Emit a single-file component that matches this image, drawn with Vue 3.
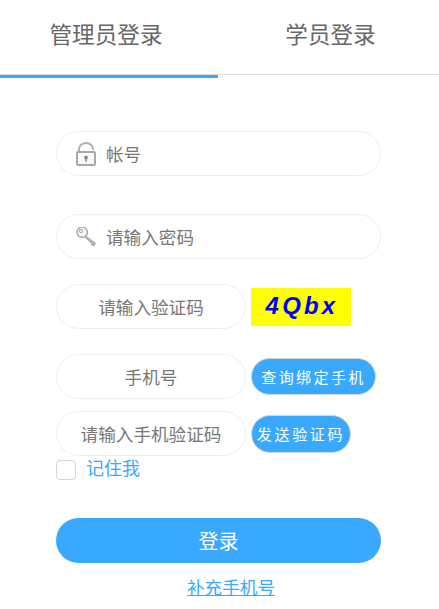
<script setup>
</script>

<template>
  <div class="page">
    <div class="tabs">
      <div class="tab active">管理员登录</div>
      <div class="tab second-tab">学员登录</div>
    </div>
    <form class="form" @submit.prevent>
      <div class="field wide">
        <svg class="icon" viewBox="0 0 20 24" width="20" height="24">
          <path d="M3 10V7.2a7 6.2 0 0 1 14 0v0.8" fill="none" stroke="#b0b0b0" stroke-width="2"/>
          <rect x="1" y="10" width="18" height="13" rx="1" fill="#fafafa" stroke="#a8a8a8" stroke-width="2"/>
          <circle cx="10" cy="15.5" r="1.9" fill="#888"/>
          <rect x="9.2" y="16" width="1.6" height="3.6" fill="#888"/>
        </svg>
        <span class="ph">帐号</span>
      </div>
      <div class="field wide second">
        <svg class="icon" viewBox="0 0 20 20" width="20" height="20">
          <circle cx="6.2" cy="5.2" r="5.2" fill="#f6f6f6" stroke="#b0b0b0" stroke-width="1.6"/>
          <circle cx="5" cy="4" r="1.6" fill="none" stroke="#b0b0b0" stroke-width="1.1"/>
          <path d="M10 8.5 L20 16 L18.5 19.5 L15.5 18.5 L14.5 16 L8.5 10.5 Z" fill="#b5b5b5"/>
        </svg>
        <span class="ph">请输入密码</span>
      </div>
      <div class="row third">
        <div class="field short center"><span class="ph">请输入验证码</span></div>
        <div class="captcha">4Qbx</div>
      </div>
      <div class="row fourth">
        <div class="field short center"><span class="ph">手机号</span></div>
        <button type="button" class="pill">查询绑定手机</button>
      </div>
      <div class="row fifth">
        <div class="field short center"><span class="ph">请输入手机验证码</span></div>
        <button type="button" class="pill small">发送验证码</button>
      </div>
      <label class="remember">
        <span class="check"></span>
        <span class="rem-text">记住我</span>
      </label>
      <button type="button" class="login">登录</button>
      <div class="link-row"><a class="link" href="#">补充手机号</a></div>
    </form>
  </div>
</template>

<style>
html, body { margin: 0; background: #fff; }
</style>

<style scoped>
.page {
  width: 439px;
  height: 609px;
  overflow: hidden;
  background: #fff;
  font-family: "Noto Sans CJK SC", "Liberation Sans", sans-serif;
}
.tabs {
  display: flex;
  height: 74px;
  border-bottom: 1px solid #dcdcdc;
  box-sizing: content-box;
}
.tab {
  flex: none;
  display: flex;
  justify-content: center;
  padding-top: 17px;
  font-size: 22.6px;
  line-height: 34px;
  color: #666;
  position: relative;
  box-sizing: border-box;
}
.tab.active {
  width: 218px;
  padding-right: 6px;
}
.second-tab {
  width: 221px;
  padding-left: 4px;
}
.tab.active::after {
  content: "";
  position: absolute;
  left: 0;
  right: 0;
  bottom: -4px;
  height: 3px;
  background: #39a9ff;
}
.form {
  padding: 56px 58px 0 56px;
  display: flex;
  flex-direction: column;
}
.field {
  height: 45px;
  box-sizing: border-box;
  border: 1px solid #eeeeee;
  border-radius: 23px;
  display: flex;
  align-items: center;
  background: #fff;
}
.wide {
  width: 325px;
  padding-left: 19px;
  gap: 10px;
}
.second { margin-top: 38px; }
.short {
  width: 190px;
  flex: none;
}
.center { justify-content: center; }
.ph {
  font-size: 17.6px;
  color: #777;
  line-height: 24px;
}
.icon { flex: none; }
.row {
  display: flex;
  align-items: center;
  gap: 5px;
}
.third { margin-top: 25px; }
.fourth { margin-top: 25px; }
.fifth { margin-top: 12px; }
.captcha {
  width: 100px;
  height: 38px;
  box-sizing: border-box;
  padding: 0 0 2px 2px;
  background: #ffff00;
  color: #0000ff;
  font-family: "Liberation Sans", sans-serif;
  font-weight: 700;
  font-style: italic;
  font-size: 24px;
  letter-spacing: 3.2px;
  line-height: 36px;
  text-align: center;
}
.pill {
  width: 125px;
  height: 37px;
  padding: 0;
  border: 1px solid #d5d5d5;
  border-radius: 19px;
  background: #39a9ff;
  color: #fff;
  font-family: inherit;
  font-size: 15px;
  letter-spacing: 2.4px;
  line-height: 35px;
  text-align: center;
}
.pill.small { width: 100px; height: 38px; letter-spacing: 2.7px; }
.remember {
  display: flex;
  align-items: flex-start;
  gap: 10px;
  margin-top: 4px;
  height: 20px;
}
.check {
  width: 20px;
  height: 20px;
  box-sizing: border-box;
  border: 1px solid #d4d4d4;
  border-radius: 4px;
  flex: none;
}
.rem-text {
  font-size: 18px;
  line-height: 15px;
  color: #39a9ff;
}
.login {
  margin-top: 38px;
  width: 325px;
  height: 45px;
  border: 0;
  border-radius: 23px;
  background: #39a9ff;
  color: #fff;
  font-family: inherit;
  font-size: 20px;
  line-height: 45px;
  padding: 0;
}
.link-row {
  width: 350px;
  margin-top: 11px;
  text-align: center;
  line-height: 26px;
}
.link {
  font-size: 17.6px;
  color: #39a9ff;
  text-decoration: underline;
}
</style>
